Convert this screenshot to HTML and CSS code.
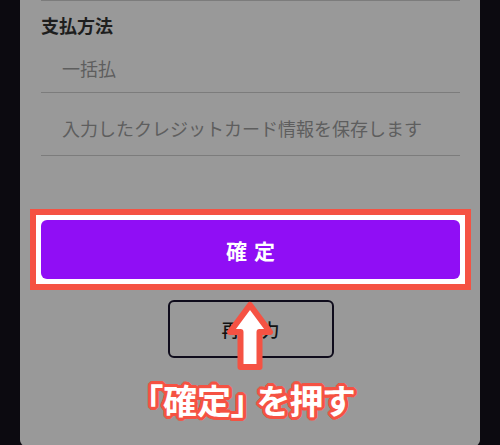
FILE: index.html
```html
<!DOCTYPE html>
<html lang="ja">
<head>
<meta charset="utf-8">
<title>支払方法</title>
<link rel="stylesheet" href="styles.css">
</head>
<body>
<div class="screen">
  <div class="panel">
    <div class="rule"></div>
    <h2 class="section-title">支払方法</h2>
    <div class="field">一括払</div>
    <div class="field field-check">入力したクレジットカード情報を保存します</div>
    <div class="actions">
      <div class="highlight">
        <button class="btn-primary">確定</button>
      </div>
      <button class="btn-secondary">再入力</button>
    </div>
  </div>
  <svg class="arrow" width="500" height="445" viewBox="0 0 500 445" aria-hidden="true">
    <path d="M250 305 L270 332 L259.5 332 L259.5 367 L240.5 367 L240.5 332 L230 332 Z" fill="#ffffff" stroke="#f55243" stroke-width="6" stroke-linejoin="round"/>
  </svg>
  <div class="caption"><span class="caption-quote">「確定」</span>を押す</div>
</div>
</body>
</html>
```

FILE: styles.css
```css
* { box-sizing: border-box; }

html, body {
  margin: 0;
  padding: 0;
}

body {
  background: #0c0a10;
  font-family: "Noto Sans CJK JP", "Noto Sans", sans-serif;
  width: 500px;
  height: 445px;
  overflow: hidden;
}

.screen {
  position: relative;
  width: 500px;
  height: 445px;
}

.panel {
  margin: 0 20px;
  height: 446px;
  background: #999999;
  border-radius: 0 0 6px 6px;
  padding: 0 20px 0 21px;
  display: flex;
  flex-direction: column;
}

.rule {
  height: 1px;
  background: #7c7c7c;
}

.section-title {
  margin: 12px 0 0;
  font-size: 18px;
  line-height: 24px;
  font-weight: 700;
  color: #1e1e1e;
}

.field {
  padding: 19px 0 12px 21px;
  font-size: 18px;
  line-height: 24px;
  color: #5e5e5e;
  border-bottom: 1px solid #7c7c7c;
}

.field-check {
  padding: 23px 0 15px 21px;
}

.actions {
  margin-top: 53px;
  display: flex;
  flex-direction: column;
  align-items: center;
}

.highlight {
  align-self: stretch;
  margin: 0 -11px;
  border: 6px solid #f55243;
  padding: 5px;
  background: #ffffff;
}

.btn-primary {
  display: block;
  width: 100%;
  height: 59px;
  border: 0;
  border-radius: 6px;
  background: #900ef5;
  color: #ffffff;
  font-family: inherit;
  font-size: 21px;
  font-weight: 700;
  letter-spacing: 7px;
  padding: 0 0 0 7px;
}

.btn-secondary {
  margin-top: 10px;
  width: 166px;
  height: 58px;
  border: 2px solid #0f0c1c;
  border-radius: 6px;
  background: transparent;
  color: #121212;
  font-family: inherit;
  font-size: 18px;
  font-weight: 500;
  letter-spacing: 2px;
  padding: 0 0 0 2px;
}

.arrow {
  position: absolute;
  left: 0;
  top: 0;
  pointer-events: none;
}

.caption {
  position: absolute;
  left: 0;
  right: 0;
  top: 376px;
  text-align: center;
  font-size: 34px;
  line-height: 48px;
  font-weight: 700;
  color: #ffffff;
  font-feature-settings: "palt";
  text-shadow:
    3px 0 0 #f55243, -3px 0 0 #f55243, 0 3px 0 #f55243, 0 -3px 0 #f55243,
    2px 2px 0 #f55243, -2px 2px 0 #f55243, 2px -2px 0 #f55243, -2px -2px 0 #f55243,
    3px 1px 0 #f55243, -3px 1px 0 #f55243, 3px -1px 0 #f55243, -3px -1px 0 #f55243,
    1px 3px 0 #f55243, -1px 3px 0 #f55243, 1px -3px 0 #f55243, -1px -3px 0 #f55243;
}

.caption-quote {
  margin-right: 9px;
}
```
